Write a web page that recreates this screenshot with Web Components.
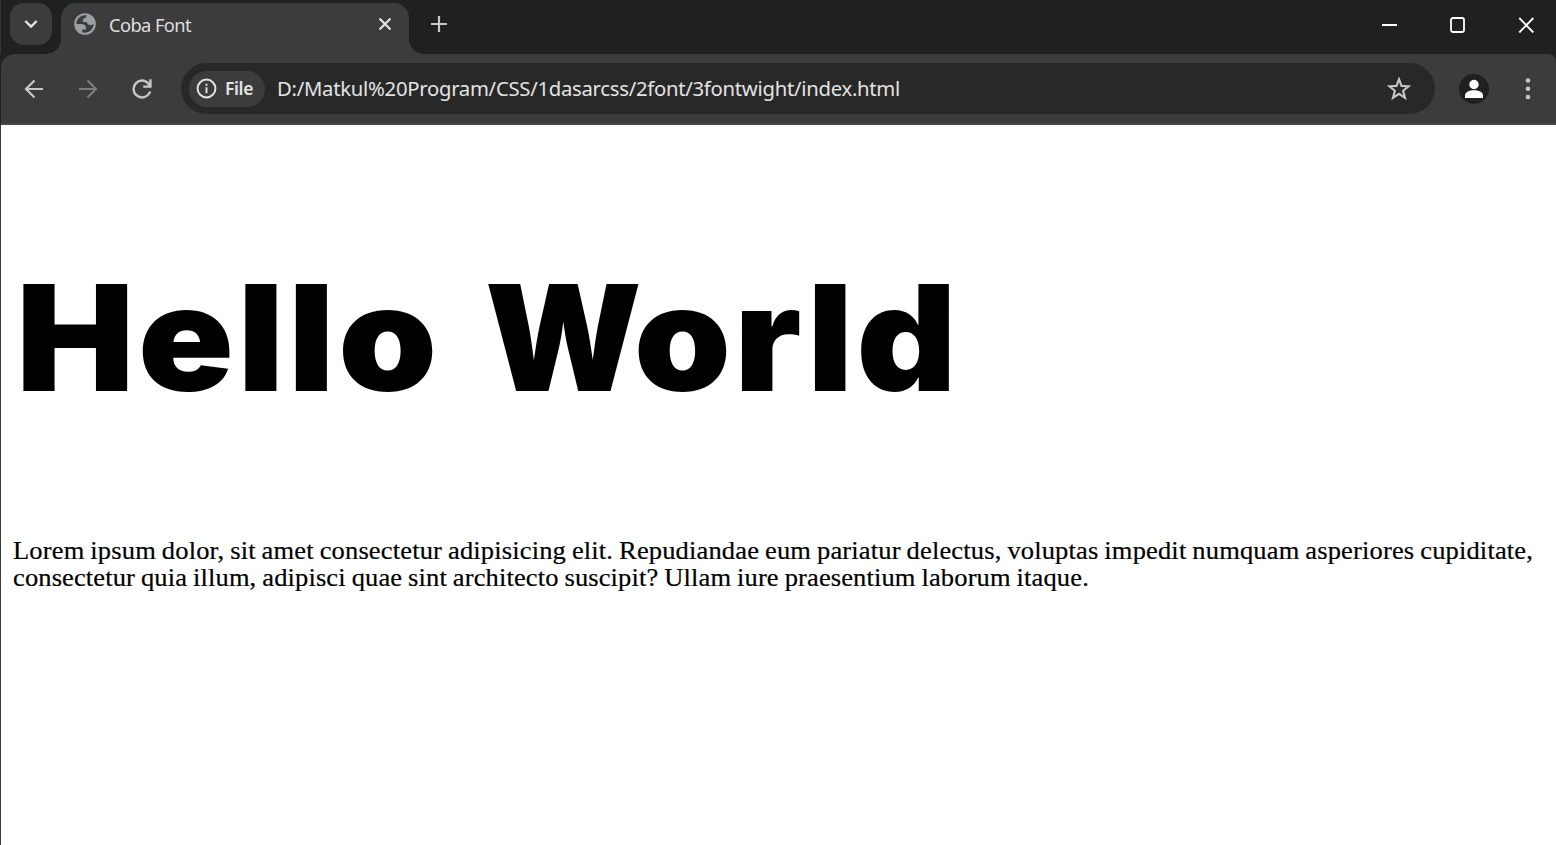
<!DOCTYPE html>
<html lang="en">
<head>
<meta charset="utf-8">
<title>Coba Font</title>
<style>
html,body{margin:0;height:100%;overflow:hidden;background:#fff}
.word{display:flex}
</style>
</head>
<body>
<browser-window>
  <tab-strip slot="tabs"><fit-text width="82">Coba Font</fit-text></tab-strip>
  <tool-bar slot="toolbar"><fit-text slot="chip" width="28">File</fit-text><fit-text width="623">D:/Matkul%20Program/CSS/1dasarcss/2font/3fontwight/index.html</fit-text></tool-bar>
  <page-view>
    <fit-text slot="title" width="395" scale="1.075">Hello</fit-text>
    <span slot="title" class="word"><fit-text width="151" scale=".985">W</fit-text><fit-text width="309" scale="1.055">orld</fit-text></span>
    <fit-text width="1434" scale="1.06">Lorem ipsum dolor, sit amet consectetur adipisicing elit. Repudiandae eum pariatur delectus, voluptas impedit numquam asperiores cupiditate,</fit-text>
    <fit-text width="1015" scale="1.06">consectetur quia illum, adipisci quae sint architecto suscipit? Ullam iure praesentium laborum itaque.</fit-text>
  </page-view>
</browser-window>
<script>
const define=(name,html,extra)=>customElements.define(name,class extends HTMLElement{
  constructor(){super();this.attachShadow({mode:'open'}).innerHTML=html;}
  connectedCallback(){if(extra)extra(this);}
});

define('browser-window',`<style>
:host{display:flex;flex-direction:column;height:845px;width:1556px;background:#3b3b3b}
</style><slot name="tabs"></slot><slot name="toolbar"></slot><slot></slot>`);

define('tab-strip',`<style>
:host{display:flex;height:54px;flex:none;background:#1f2120;color:#dfdfdf;font:18.3px/24px "Noto Sans",sans-serif;border-left:1px solid #333;box-sizing:border-box}
svg{display:block;flex:none}
.search{width:42px;height:42px;margin:3px 0 0 9px;border-radius:14px;background:#3c3c3c}
.tab{position:relative;box-sizing:border-box;width:348px;height:51px;margin:3px 0 0 9px;background:#3c3c3c;border-radius:15px 15px 0 0;display:flex;align-items:flex-start;padding:10px 17px 0 13px}
.tab::before,.tab::after{content:"";position:absolute;bottom:0;width:15px;height:15px}
.tab::before{left:-15px;background:radial-gradient(circle at 0 0,transparent 14.5px,#3c3c3c 15.2px)}
.tab::after{right:-15px;background:radial-gradient(circle at 100% 0,transparent 14.5px,#3c3c3c 15.2px)}
.name{margin:0 auto 0 13px}
.plus{margin:16px 0 0 22px}
.win{display:flex;margin-left:auto;gap:53px;padding:17px 22px 0 0}
</style>
<div class="search"><svg width="42" height="42" fill="none" stroke="#e5e5e5" stroke-width="2.4"><path d="M15.3 18l5.7 5.5 5.7-5.5"/></svg></div>
<div class="tab">
<svg width="22" height="22" viewBox="1.8 1.8 20.4 20.4"><circle cx="12" cy="12" r="10" fill="#9aa0a6"/><path d="M4 12h4.400c3.407.022 4.922 1.730 4.543 5.127H9.488v2.470a8.004 8.004 0 0 0 10.498-8.083C19.327 12.504 18.332 13 17 13c-2.137 0-3.206-.916-3.206-2.750h-3.748c-.274-2.728.683-4.092 2.870-4.092 0-.975.327-1.597.811-1.970A8.004 8.004 0 0 0 4 12z" fill="#3c3c3c"/></svg>
<div class="name"><slot></slot></div>
<svg width="14" height="14" style="margin-top:4px" stroke="#e3e3e3" stroke-width="2.2" fill="none"><path d="M1.500 1.500l11 11m0-11l-11 11"/></svg></div>
<svg class="plus" width="16" height="16" stroke="#c7c7c7" stroke-width="2.2" fill="none"><path d="M8 0v16M0 8h16"/></svg>
<div class="win"><svg width="15" height="16"><path d="M0 8h15" stroke="#fff" stroke-width="2"/></svg>
<svg width="15" height="16"><rect x="1" y="1" width="13" height="14" rx="2" fill="none" stroke="#fff" stroke-width="1.800"/></svg>
<svg width="16" height="16"><path d="M1.300 1l14 14.500M15.300 1l-14 14.500" stroke="#fff" stroke-width="1.800"/></svg></div>`);

define('tool-bar',`<style>
:host{display:block;flex:none;height:71px;background:#1f2120}
.bar{box-sizing:border-box;height:71px;margin-left:1px;background:#3c3c3c;border-bottom:2px solid #484747;border-radius:14px 8px 0 0;display:flex;align-items:center;padding:0 17px 0 23px;gap:32px}
svg{display:block;flex:none}
.url{box-sizing:border-box;flex:none;display:flex;align-items:center;width:1254px;height:51px;border-radius:26px;background:#282828;color:#e3e3e3;font:20.3px/28px "Noto Sans",sans-serif;padding:0 24px 0 8px;margin:0 -8px 0 -15px}
.chip{box-sizing:border-box;display:flex;align-items:center;width:76px;height:36px;border-radius:18px;background:#3c3c3c;padding-left:7px;font-size:17.500px;font-weight:600;margin-right:12px}
.chip svg{margin-right:8px}
.star{margin-left:auto}
.lift{margin-top:-2px}
</style>
<div class="bar">
<svg width="20" height="20" fill="none" stroke="#c7c7c7" stroke-width="2.2"><path d="M19 10H2.500M10.500 1.500L2 10l8.500 8.500"/></svg>
<svg width="20" height="20" style="margin-left:2px" fill="none" stroke="#7c7c7c" stroke-width="2.2"><path d="M1 10h16.500M9.500 1.500L18 10l-8.500 8.500"/></svg>
<svg width="20" height="20" style="margin-left:2px;margin-right:12px" viewBox="3.700 3.700 16.600 16.600" fill="#c7c7c7"><path d="M12 20q-3.350 0-5.675-2.325T4 12t2.325-5.675T12 4q1.725 0 3.300.712T18 6.750V4h2v7h-7V9h4.200q-.8-1.400-2.188-2.200T12 6Q9.500 6 7.750 7.750T6 12t1.750 4.250T12 18q1.925 0 3.475-1.100T17.650 14h2.100q-.7 2.650-2.850 4.325T12 20"/></svg>
<div class="url"><div class="chip"><svg width="21" height="21"><circle cx="10.500" cy="10.500" r="8.900" fill="none" stroke="#e3e3e3" stroke-width="2"/><path d="M10.500 9.300v6M10.500 5.800v2" stroke="#e3e3e3" stroke-width="1.900"/></svg><div class="lift"><slot name="chip"></slot></div></div><div class="lift"><slot></slot></div>
<svg class="star" width="24" height="24" viewBox="0 0 24 24"><path d="M12 2.200l2.500 6.700 7.200.4-5.600 4.500 1.900 7-6-4-6 4 1.900-7L2.300 9.300l7.200-.4z" fill="none" stroke="#c7c7c7" stroke-width="2.1"/></svg></div>
<svg width="30" height="30"><circle cx="15" cy="15" r="15" fill="#1f2120"/><circle cx="15" cy="10.500" r="4.700" fill="#fff"/><path d="M6 24v-2.500c0-3.500 4.500-5.300 9-5.300s9 1.800 9 5.300V24z" fill="#fff"/></svg>
<svg width="22" height="24" style="margin-left:-4px" fill="#c7c7c7"><circle cx="11" cy="3.500" r="2.300"/><circle cx="11" cy="11.800" r="2.300"/><circle cx="11" cy="20" r="2.300"/></svg>
</div>`);

define('page-view',`<style>
:host{display:block;flex:1;box-sizing:border-box;border-left:1px solid #3b3b3b;background:#fff;color:#000;padding:107px 0 0 12px;
font:25px/27px "Liberation Serif",serif}
h1{margin:0;height:305px;font:900 147px/212px Inter,sans-serif;display:flex;gap:44.7px;padding-left:2.6px;box-sizing:border-box}
p{margin:0;display:flex;flex-direction:column;word-spacing:-.8px;-webkit-text-stroke:.2px #000}
</style><h1><slot name="title"></slot></h1><p><slot></slot></p>`);

define('fit-text',`<style>:host{display:block;flex:none;white-space:nowrap}span{display:inline-block;transform-origin:0 0}</style><span><slot></slot></span>`,el=>{
  const span=el.shadowRoot.querySelector('span'),n=el.textContent.length;
  const w=+el.getAttribute('width'),scale=+(el.getAttribute('scale')||1);
  span.style.letterSpacing=(w-span.getBoundingClientRect().width)/n+'px';
  if(scale!==1){span.style.transform='scaleX('+scale+')';el.style.width=w*scale+'px';}
});
</script>
</body>
</html>
